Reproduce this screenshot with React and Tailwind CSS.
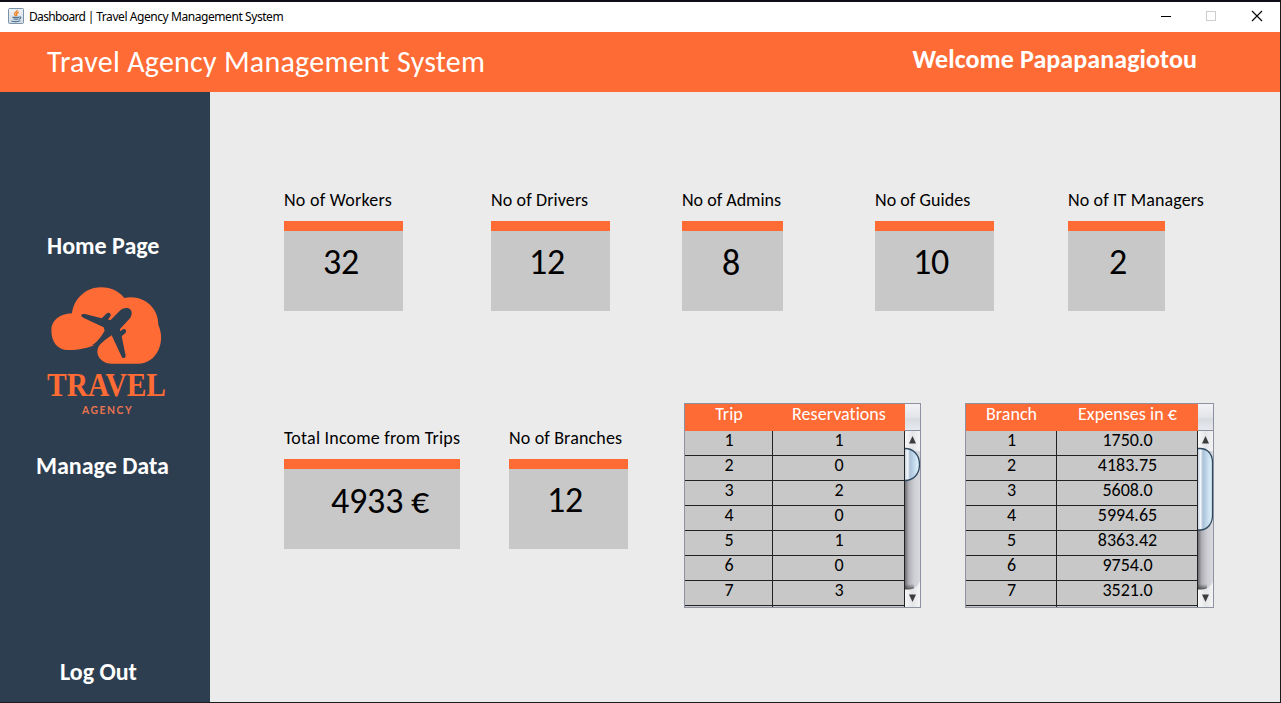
const face = "font-['Carlito','Lato',sans-serif]";

function JavaIcon() {
  return (
    <svg className="ml-2 mt-[6px] h-4 w-4 shrink-0" viewBox="0 0 16 16">
      <defs>
        <linearGradient id="jbg" x1="0" y1="0" x2="0" y2="1">
          <stop offset="0" stopColor="#eef2f6" />
          <stop offset="1" stopColor="#d3dce3" />
        </linearGradient>
      </defs>
      <rect x=".5" y=".5" width="15" height="15" rx="1" fill="url(#jbg)" stroke="#7b93a8" />
      <path d="M9.200 2c.6 1.500-2.800 2.300-2.600 3.900.1.800.9 1.200.8 2.300M10.800 4.200c-1.300.5-2.400 1.200-2.100 2.100.3.600.3 1-.2 1.700" fill="none" stroke="#f0801c" strokeWidth="1.400" />
      <path d="M4.300 9.300h6.700M5.500 11.200h5M11.300 8.900c1.900-.5 2.200 1.500-.2 2.300M3.300 13c2 .8 7 .8 9-.2" fill="none" stroke="#4f7596" strokeWidth="1.200" />
    </svg>
  );
}

function TitleBar() {
  return (
    <div className="flex h-[30px] bg-white">
      <JavaIcon />
      <span className="ml-[5px] mt-[7px] whitespace-nowrap font-['Noto_Sans',sans-serif] text-[12px] leading-4 tracking-[-0.43px] text-black">
        <span className="tracking-[-0.65px]">Dashboard | </span>Travel Agency Management System
      </span>
      <svg className="ml-auto mr-[17px] mt-[8px] h-3 w-[103px]" viewBox="0 0 103 12" shapeRendering="crispEdges" fill="none">
        <path d="M1 6.500h10" stroke="#000" />
        <path d="M46.500 1.500h9v9h-9z" stroke="#ccc" />
        <path d="M92 1l10 10M102 1L92 11" stroke="#000" shapeRendering="auto" strokeWidth="1.100" />
      </svg>
    </div>
  );
}

function Header() {
  return (
    <div className={`flex h-[60px] justify-between bg-[#ff6b35] pl-[47px] pr-[83px] text-white ${face}`}>
      <span className="mt-[12px] whitespace-nowrap text-[30px] leading-[36px] tracking-[0.26px]">Travel Agency Management System</span>
      <span className="mt-[12px] whitespace-nowrap text-[26px] font-bold leading-[30px] tracking-[0.08px]">Welcome Papapanagiotou</span>
    </div>
  );
}

function Logo() {
  return (
    <svg className="h-[150px] w-[150px]" viewBox="0 0 450 450">
      <path
        d="M126 115C132 70 168 37 213 37c32 0 56 14 70 32 48-12 103 22 102 81 24 52-6 116-60 116h-80c-34 0-54-32-36-56 4-6 10-8 15-16-30 20-68 31-110 31-32 0-50-24-50-60 0-28 24-48 62-50z"
        fill="#ff6b35"
      />
      <path
        d="M154 120c2-4 8-4 14-2l47 12 16-15c6-4 13 1 11 7l-8 12 8 1 29-29c14-12 36-8 34 10-1 10-6 15-12 21l-23 25 1 7 8-6c7-3 12 4 8 10l-12 11 12 58c0 4-4 8-8 7-3-1-4-3-5-6l-29-62-17 12c-14 10-27 19-43 18 18-11 29-27 39-44l-3-10-61-29c-4-2-7-5-6-8z"
        fill="#2d3e50"
      />
      <text x="51" y="364" fontFamily="'Liberation Serif',serif" fontWeight="700" fontSize="98" textLength="357" lengthAdjust="spacingAndGlyphs" fill="#ff6b35">TRAVEL</text>
      <text x="156" y="416" fontFamily="Lato,sans-serif" fontWeight="700" fontSize="31" textLength="149" lengthAdjust="spacing" fill="#e87450">AGENCY</text>
    </svg>
  );
}

function Sidebar() {
  return (
    <nav className={`flex w-[210px] shrink-0 flex-col bg-[#2d3e50] text-white text-[24px] font-bold leading-[30px] ${face}`}>
      <a className="ml-[47px] mt-[139px] whitespace-nowrap">Home Page</a>
      <div className="ml-[30px] mt-[14px]"><Logo /></div>
      <a className="ml-[36px] mt-[26px] whitespace-nowrap">Manage Data</a>
      <a className="ml-[60px] mt-[176px] whitespace-nowrap">Log Out</a>
    </nav>
  );
}

function StatCard({ label, value, box, pad, labelClass = "" }) {
  return (
    <div className={`${box} shrink-0`}>
      <div className={`whitespace-nowrap text-[18px] leading-[22px] text-black ${labelClass}`}>{label}</div>
      <div className={`mt-[10px] h-[90px] border-t-[10px] border-[#ff6b35] bg-[#c8c8c8] ${pad}`}>
        <div className="whitespace-nowrap text-[36px] leading-[44px] tracking-[-0.2px] text-black">{value}</div>
      </div>
    </div>
  );
}

function ScrollBar({ id, thumb }) {
  return (
    <svg className="h-[203px] w-[15px] shrink-0" viewBox="0 0 15 203">
      <defs>
        <linearGradient id={`${id}c`} x1="0" y1="0" x2="0" y2="1">
          <stop offset="0" stopColor="#f2f3f6" />
          <stop offset=".5" stopColor="#e2e4e8" />
          <stop offset=".55" stopColor="#d8dbe0" />
          <stop offset="1" stopColor="#e8eaee" />
        </linearGradient>
        <linearGradient id={`${id}t`}>
          <stop offset="0" stopColor="#6d6d72" />
          <stop offset=".25" stopColor="#b0b0b6" />
          <stop offset=".6" stopColor="#cdced4" />
          <stop offset="1" stopColor="#d8d9de" />
        </linearGradient>
        <linearGradient id={`${id}b`}>
          <stop offset="0" stopColor="#f8f8f9" />
          <stop offset=".5" stopColor="#e4e5e8" />
          <stop offset="1" stopColor="#f4f4f5" />
        </linearGradient>
        <linearGradient id={`${id}h`}>
          <stop offset="0" stopColor="#c4d4e4" />
          <stop offset=".18" stopColor="#f4f8fb" />
          <stop offset=".34" stopColor="#a9c0d6" />
          <stop offset=".65" stopColor="#c5dcee" />
          <stop offset="1" stopColor="#e4f4fc" />
        </linearGradient>
        <linearGradient id={`${id}s`} x1="0" y1="0" x2="0" y2="1">
          <stop offset="0" stopColor="#333" stopOpacity="0" />
          <stop offset="1" stopColor="#333" stopOpacity=".8" />
        </linearGradient>
      </defs>
      <rect width="15" height="27" fill={`url(#${id}c)`} />
      <rect y="26" width="15" height="1" fill="#8c8f9d" />
      <rect y="27" width="15" height="176" fill={`url(#${id}t)`} />
      <rect y="27" width="15" height="20" fill={`url(#${id}b)`} />
      <rect y="180" width="9" height="6" fill={`url(#${id}s)`} />
      <path d="M0 185.500h4c6 0 9-4 11-8v25.500H0z" fill={`url(#${id}b)`} />
      <path d="M4 39.500L7.500 32l3.500 7.500z" fill="#3c3c3c" />
      <path d="M4 190.500l3.500 7.500 3.500-7.500z" fill="#3c3c3c" />
      <path d={thumb} fill={`url(#${id}h)`} stroke="#2f4a60" strokeWidth="1.300" />
    </svg>
  );
}

function DataTable({ id, head, rows, width, first, second, thumb }) {
  return (
    <div className={`flex h-[205px] shrink-0 overflow-hidden border border-[#8e92a0] ${width}`}>
      <div className="flex min-w-0 flex-1 flex-col bg-[#c8c8c8]">
        <div className="flex h-[27px] shrink-0 bg-[#ff6b35] text-center text-[18px] leading-[20px] tracking-[0.05px] text-white">
          <div className={first}>{head[0]}</div>
          <div className={second}>{head[1]}</div>
        </div>
        {rows.map((r, i) => (
          <div key={i} className="flex h-[25px] shrink-0 text-center text-[18px] leading-[18px] text-black">
            <div className={`border-b border-r border-[#222] pl-px ${first}`}>{r[0]}</div>
            <div className={`border-b border-r border-[#222] pl-px ${second}`}>{r[1]}</div>
          </div>
        ))}
        <div className="flex h-px">
          <div className={`border-r border-[#222] ${first}`} />
          <div className={`border-r border-[#222] ${second}`} />
        </div>
      </div>
      <ScrollBar id={id} thumb={thumb} />
    </div>
  );
}

const trips = [["1", "1"], ["2", "0"], ["3", "2"], ["4", "0"], ["5", "1"], ["6", "0"], ["7", "3"]];
const branches = [
  ["1", "1750.0"], ["2", "4183.75"], ["3", "5608.0"], ["4", "5994.65"],
  ["5", "8363.42"], ["6", "9754.0"], ["7", "3521.0"],
];

export default function App() {
  return (
    <div className="flex h-[703px] w-[1281px] flex-col overflow-hidden border-b border-r border-t-2 border-[#1a1a1f] border-t-[#0e0e18] bg-[#ebebeb]">
      <TitleBar />
      <Header />
      <div className="flex min-h-0 flex-1">
        <Sidebar />
        <main className={`flex flex-1 flex-col pl-[74px] ${face}`}>
          <div className="mt-[97px] flex">
            <StatCard label="No of Workers" value="32" box="w-[119px] mr-[88px]" pad="pl-[39px] pt-[9px]" labelClass="tracking-[0.24px]" />
            <StatCard label="No of Drivers" value="12" box="w-[119px] mr-[72px]" pad="pl-[38px] pt-[9px]" labelClass="tracking-[0.12px]" />
            <StatCard label="No of Admins" value="8" box="w-[101px] mr-[92px]" pad="pl-[40px] pt-[10px]" />
            <StatCard label="No of Guides" value="10" box="w-[119px] mr-[74px]" pad="pl-[38px] pt-[9px]" labelClass="tracking-[0.05px]" />
            <StatCard label="No of IT Managers" value="2" box="w-[97px]" pad="pl-[41px] pt-[9px]" labelClass="tracking-[0.12px]" />
          </div>
          <div className="mt-[92px] flex">
            <div className="mt-[24px] flex">
              <StatCard label="Total Income from Trips" value="4933 €" box="w-[176px] mr-[49px]" pad="pl-[47px] pt-[10px]" labelClass="tracking-[0.2px]" />
              <StatCard label="No of Branches" value="12" box="w-[119px] mr-[56px]" pad="pl-[38px] pt-[9px]" labelClass="tracking-[0.15px]" />
            </div>
            <DataTable id="a" head={["Trip", "Reservations"]} rows={trips} width="w-[237px] mr-[44px]" first="w-[88px]" second="w-[132px]"
              thumb="M0 44.500c8 0 14.500 6 14.500 16S8 76.500 0 76.500" />
            <DataTable id="b" head={["Branch", "Expenses in €"]} rows={branches} width="w-[249px]" first="w-[91px]" second="w-[141px]"
              thumb="M0 44.500h2c8 0 12.500 6 12.500 14v53c0 8-5 14.500-12.500 14.500H0" />
          </div>
        </main>
      </div>
    </div>
  );
}
